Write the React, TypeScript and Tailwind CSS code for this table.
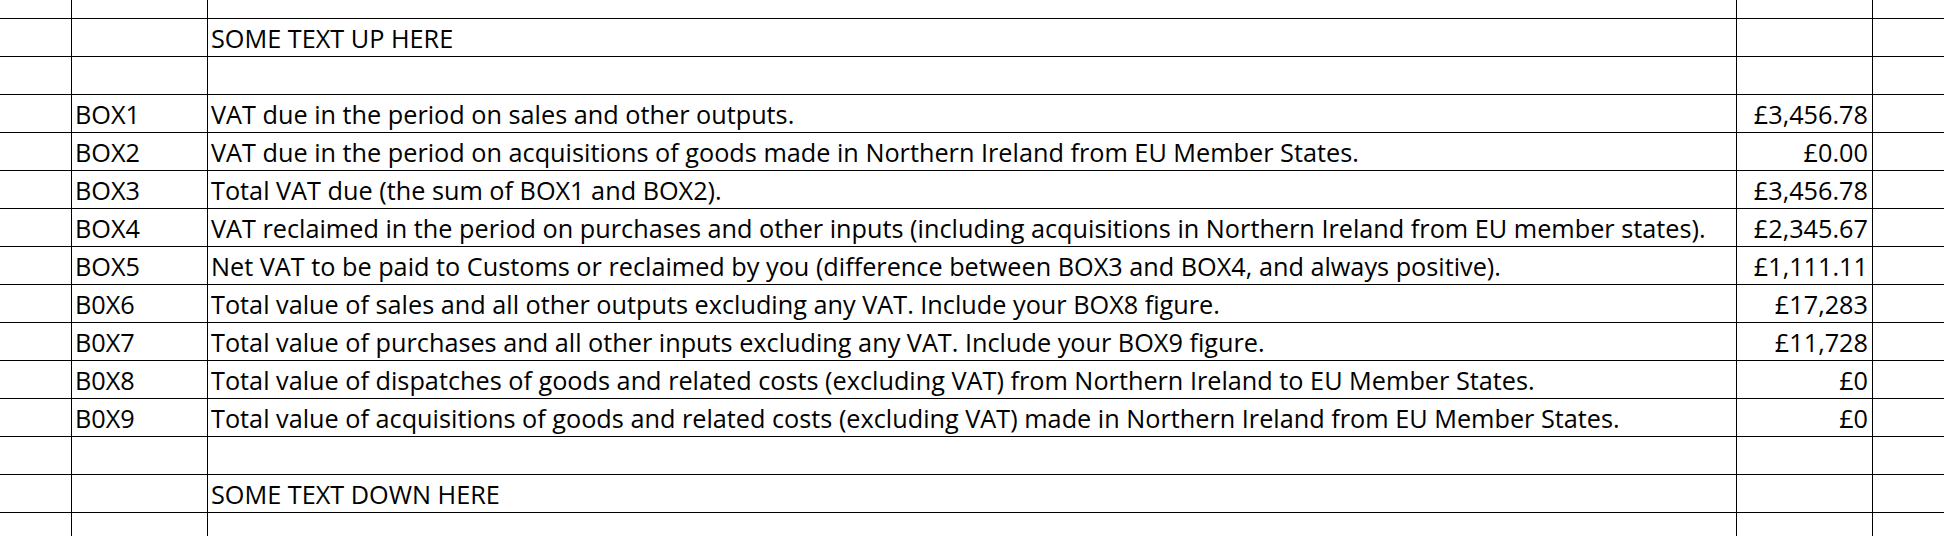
import React from "react";

type Row = { b?: string; c?: string; d?: string };

const rows: Row[] = [
  {},
  { c: "SOME TEXT UP HERE" },
  {},
  { b: "BOX1", c: "VAT due in the period on sales and other outputs.", d: "£3,456.78" },
  { b: "BOX2", c: "VAT due in the period on acquisitions of goods made in Northern Ireland from EU Member States.", d: "£0.00" },
  { b: "BOX3", c: "Total VAT due (the sum of BOX1 and BOX2).", d: "£3,456.78" },
  { b: "BOX4", c: "VAT reclaimed in the period on purchases and other inputs (including acquisitions in Northern Ireland from EU member states).", d: "£2,345.67" },
  { b: "BOX5", c: "Net VAT to be paid to Customs or reclaimed by you (difference between BOX3 and BOX4, and always positive).", d: "£1,111.11" },
  { b: "B0X6", c: "Total value of sales and all other outputs excluding any VAT. Include your BOX8 figure.", d: "£17,283" },
  { b: "B0X7", c: "Total value of purchases and all other inputs excluding any VAT. Include your BOX9 figure.", d: "£11,728" },
  { b: "B0X8", c: "Total value of dispatches of goods and related costs (excluding VAT) from Northern Ireland to EU Member States.", d: "£0" },
  { b: "B0X9", c: "Total value of acquisitions of goods and related costs (excluding VAT) made in Northern Ireland from EU Member States.", d: "£0" },
  {},
  { c: "SOME TEXT DOWN HERE" },
  {},
];

const cell = "flex items-end overflow-hidden whitespace-nowrap bg-white pb-[3px] leading-[30px]";

export default function App() {
  return (
    <div
      className="grid h-[536px] w-[1944px] grid-cols-[71px_135px_1528px_135px_71px] grid-rows-[18px_repeat(13,37px)_23px] gap-px overflow-hidden bg-black text-[25.25px] text-black"
      style={{ fontFamily: '"Open Sans", sans-serif' }}
    >
      {rows.map((r, i) => (
        <React.Fragment key={i}>
          <div className={cell} />
          <div className={`${cell} pl-[3px]`}>{r.b}</div>
          <div className={`${cell} pl-[3px]`}>{r.c}</div>
          <div className={`${cell} justify-end pr-[4px]`}>{r.d}</div>
          <div className={cell} />
        </React.Fragment>
      ))}
    </div>
  );
}
